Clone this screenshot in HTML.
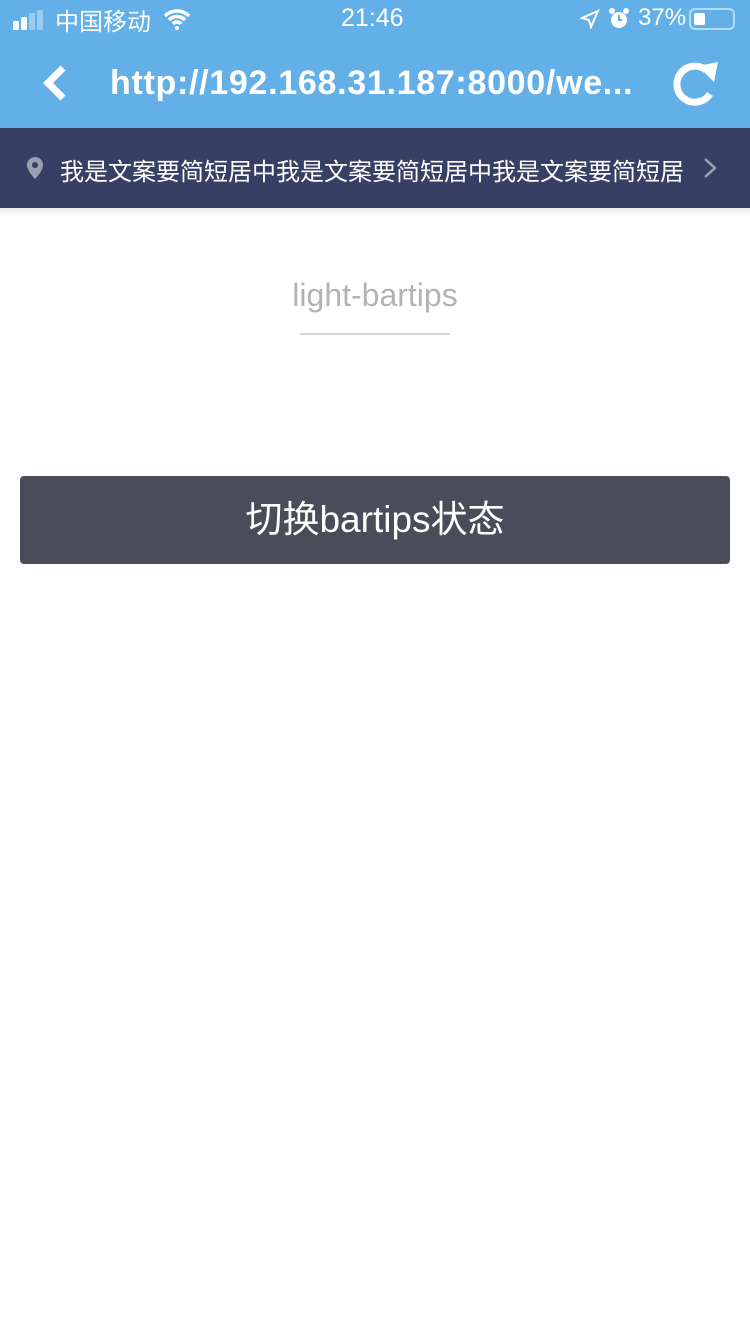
<!DOCTYPE html>
<html><head><meta charset="utf-8"><style>
*{margin:0;padding:0;box-sizing:border-box}
body{width:750px;height:1334px;background:#fff;font-family:"Liberation Sans","Noto Sans CJK SC",sans-serif;position:relative;overflow:hidden}
.top{position:absolute;left:0;top:0;width:750px;height:128px;background:#63b0e8;color:#fff}
.ab{position:absolute;white-space:nowrap}
.bar{position:absolute;top:128px;left:0;width:750px;height:80px;background:#373f65;color:#fff}
.shadow{position:absolute;top:208px;left:0;width:750px;height:8px;background:linear-gradient(#ececec,#fff)}
</style></head><body>
<div class="top">
 <div class="ab" style="left:13px;top:10px;display:flex;align-items:flex-end;height:20px">
  <span style="display:inline-block;width:6px;height:9px;background:#fff;margin-right:2px;border-radius:1px"></span><span style="display:inline-block;width:6px;height:13px;background:#fff;margin-right:2px;border-radius:1px"></span><span style="display:inline-block;width:6px;height:17px;background:#9ccbf0;margin-right:2px;border-radius:1px"></span><span style="display:inline-block;width:6px;height:20px;background:#9ccbf0;border-radius:1px"></span>
 </div>
 <div class="ab" style="left:55px;top:2px;font-size:24px">中国移动</div>
 <svg class="ab" style="left:162px;top:8px" width="30" height="22" viewBox="0 0 30 22"><path d="M3 8a17 17 0 0 1 24 0M7 12a11 11 0 0 1 16 0M11 16a5 5 0 0 1 8 0" stroke="#fff" stroke-width="3.5" fill="none"/><circle cx="15" cy="20" r="2" fill="#fff"/></svg>
 <div class="ab" style="left:341px;top:4px;font-size:25px">21:46</div>
 <svg class="ab" style="left:580px;top:9px" width="20" height="20" viewBox="0 0 20 20"><path d="M18 2L2 9l7 2 2 7z" stroke="#fff" stroke-width="2" fill="none"/></svg>
 <svg class="ab" style="left:608px;top:7px" width="22" height="24" viewBox="0 0 22 24"><circle cx="11" cy="13" r="8" fill="#fff"/><circle cx="4" cy="4" r="3" fill="#fff"/><circle cx="18" cy="4" r="3" fill="#fff"/><path d="M11 8v5h3" stroke="#63b0e8" stroke-width="2" fill="none"/></svg>
 <div class="ab" style="left:638px;top:4px;font-size:24px">37%</div>
 <div class="ab" style="left:689px;top:8px;width:46px;height:22px;border:2px solid #b6dbf5;border-radius:6px"><div style="position:absolute;left:3px;top:3px;width:11px;height:12px;background:#fff;border-radius:2px"></div></div>
 <svg class="ab" style="left:38px;top:64px" width="32" height="38" viewBox="0 0 32 38"><path d="M25 4L10 19l15 15" stroke="#fff" stroke-width="7" fill="none"/></svg>
 <div class="ab" style="left:110px;top:64px;font-size:34px;font-weight:bold;letter-spacing:0.7px">http://192.168.31.187:8000/we...</div>
 <svg class="ab" style="left:668px;top:58px" width="54" height="52" viewBox="0 0 54 52"><path d="M42 36A18 18 0 1 1 38 12" stroke="#fff" stroke-width="7" fill="none"/><path d="M30 8l20-4-4 20z" fill="#fff"/></svg>
</div>
<div class="bar">
 <svg class="ab" style="left:27px;top:29px" width="16" height="22" viewBox="0 0 16 22"><path d="M8 0a8 8 0 0 1 8 8c0 6-8 14-8 14S0 14 0 8a8 8 0 0 1 8-8z" fill="#9a9fb3"/><circle cx="8" cy="8" r="3" fill="#373f65"/></svg>
 <div class="ab" style="left:60px;top:24px;font-size:24px">我是文案要简短居中我是文案要简短居中我是文案要简短居</div>
 <svg class="ab" style="left:703px;top:29px" width="14" height="22" viewBox="0 0 14 22"><path d="M2 2l10 9-10 9" stroke="#9a9fb3" stroke-width="2.5" fill="none"/></svg>
</div>
<div class="shadow"></div>
<div class="ab" style="left:0;width:750px;top:277px;text-align:center;font-size:32px;color:#b3b3b3">light-bartips</div>
<div class="ab" style="left:300px;top:333px;width:150px;height:2px;background:#d6d6d6"></div>
<div class="ab" style="left:20px;top:476px;width:710px;height:88px;background:#4a4c59;border-radius:4px;color:#fff;font-size:37px;text-align:center;line-height:88px">切换bartips状态</div>
</body></html>
